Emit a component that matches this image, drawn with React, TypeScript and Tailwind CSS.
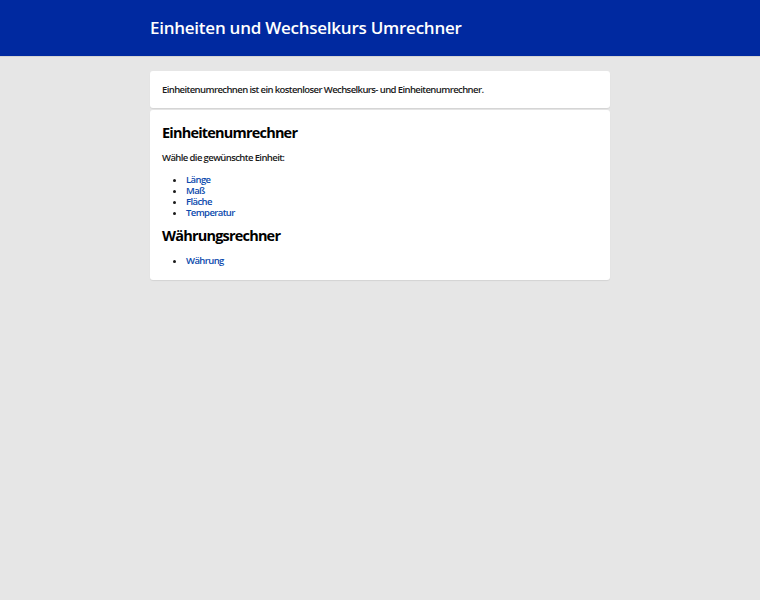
export default function App() {
  return (
    <div className="min-h-[600px] bg-[#e6e6e6] font-['Open_Sans',sans-serif]">
      <header className="h-[57px] bg-[#0029a0] border-b border-[#d4d4d4]">
        <div className="mx-auto w-[460px] pt-[15px]">
          <h1 className="text-[17px] font-semibold leading-[26px] tracking-[-0.25px] text-white">
            Einheiten und Wechselkurs Umrechner
          </h1>
        </div>
      </header>
      <main className="mx-auto w-[460px] pt-[14px] flex flex-col gap-[2px]">
        <div className="bg-white rounded-[3px] shadow-[0_1px_1px_rgba(0,0,0,0.08)] px-[12px] pt-[12px] pb-[11px]">
          <p className="text-[9.5px] font-semibold leading-[14px] tracking-[-0.6px] text-[#1a1a1a]">
            Einheitenumrechnen ist ein kostenloser Wechselkurs- und Einheitenumrechner.
          </p>
        </div>
        <div className="bg-white rounded-[3px] shadow-[0_1px_1px_rgba(0,0,0,0.08)] px-[12px] pt-[12px] pb-[14px]">
          <h2 className="text-[14.5px] font-bold leading-[22px] tracking-[-0.8px] text-black">Einheitenumrechner</h2>
          <p className="mt-[7px] text-[9.5px] font-semibold leading-[14px] tracking-[-0.6px] text-[#1a1a1a]">
            Wähle die gewünschte Einheit:
          </p>
          <ul className="mt-[9px] list-disc pl-[24px] text-[9.5px] font-semibold leading-[11px] tracking-[-0.6px] text-[#1a1a1a]">
            <li><a className="text-[#0b4aad]">Länge</a></li>
            <li><a className="text-[#0b4aad]">Maß</a></li>
            <li><a className="text-[#0b4aad]">Fläche</a></li>
            <li><a className="text-[#0b4aad]">Temperatur</a></li>
          </ul>
          <h2 className="mt-[7px] text-[14.5px] font-bold leading-[22px] tracking-[-0.8px] text-black">Währungsrechner</h2>
          <ul className="mt-[8px] list-disc pl-[24px] text-[9.5px] font-semibold leading-[11px] tracking-[-0.6px] text-[#1a1a1a]">
            <li><a className="text-[#0b4aad]">Währung</a></li>
          </ul>
        </div>
      </main>
    </div>
  );
}
